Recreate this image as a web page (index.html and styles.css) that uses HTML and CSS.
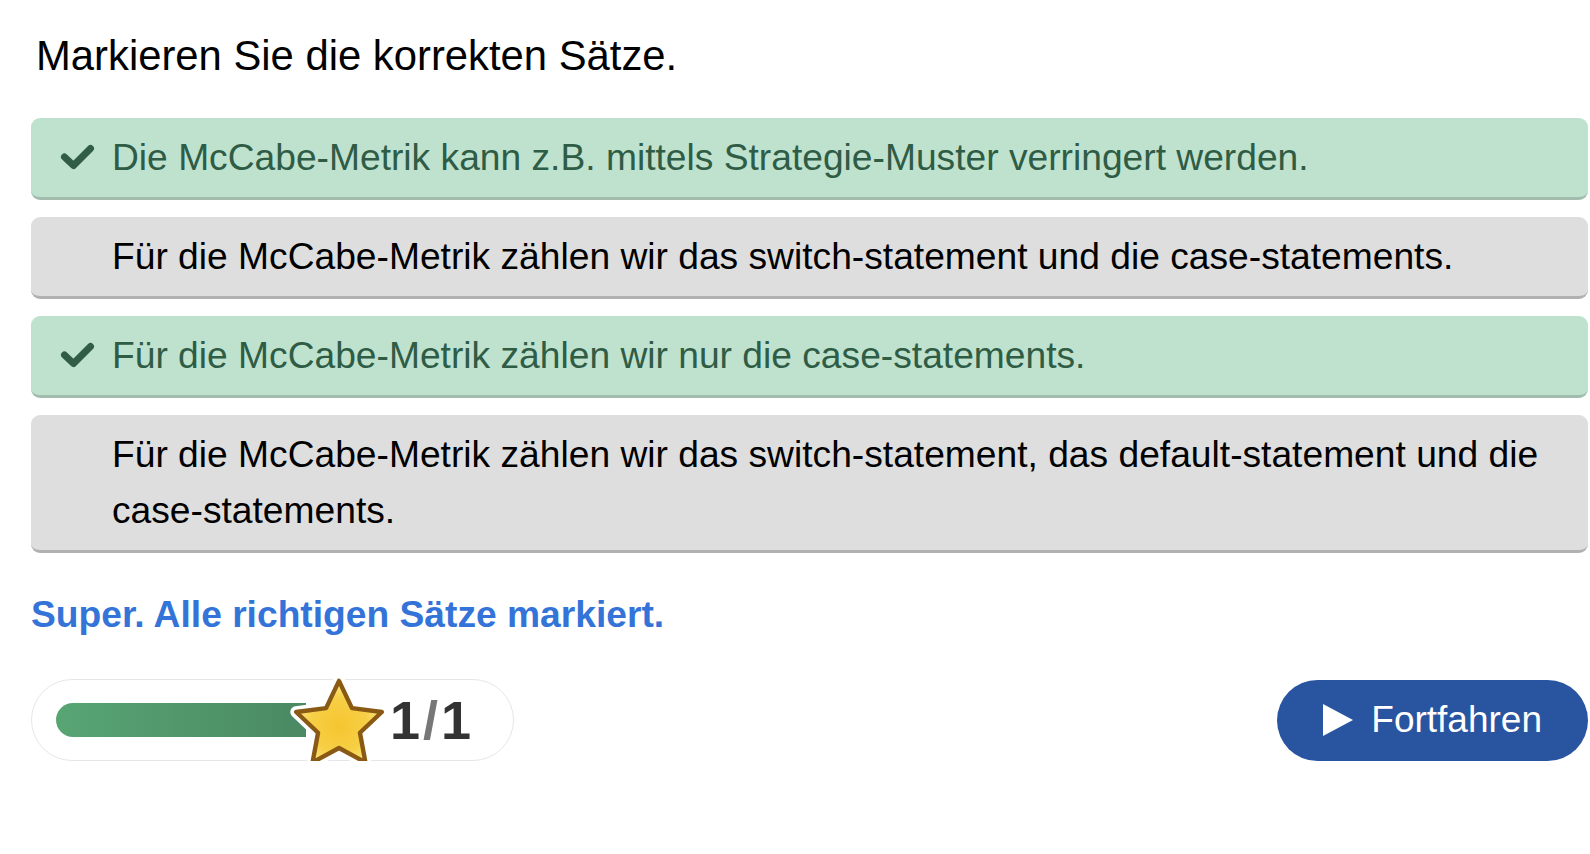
FILE: index.html
```html
<!DOCTYPE html>
<html lang="de">
<head>
<meta charset="utf-8">
<title>Markieren Sie die korrekten Sätze</title>
<link rel="stylesheet" href="styles.css">
</head>
<body>
<main class="task">
  <h1 class="task-title">Markieren Sie die korrekten Sätze.</h1>
  <ul class="choices">
    <li class="choice choice-correct">
      <svg class="check" viewBox="0 0 34 26" aria-hidden="true"><path d="M4 13 L13 21.5 L30 4.5" fill="none" stroke="currentColor" stroke-width="7" stroke-linecap="round" stroke-linejoin="round"/></svg>
      <span class="choice-text">Die McCabe-Metrik kann z.B. mittels Strategie-Muster verringert werden.</span>
    </li>
    <li class="choice">
      <span class="choice-text">Für die McCabe-Metrik zählen wir das switch-statement und die case-statements.</span>
    </li>
    <li class="choice choice-correct">
      <svg class="check" viewBox="0 0 34 26" aria-hidden="true"><path d="M4 13 L13 21.5 L30 4.5" fill="none" stroke="currentColor" stroke-width="7" stroke-linecap="round" stroke-linejoin="round"/></svg>
      <span class="choice-text">Für die McCabe-Metrik zählen wir nur die case-statements.</span>
    </li>
    <li class="choice">
      <span class="choice-text">Für die McCabe-Metrik zählen wir das switch-statement, das default-statement und die case-statements.</span>
    </li>
  </ul>
  <p class="feedback">Super. Alle richtigen Sätze markiert.</p>
  <div class="footer">
    <div class="score">
      <div class="score-bar"></div>
      <svg class="star" viewBox="0 0 100 96" aria-hidden="true">
        <defs>
          <radialGradient id="starFill" cx="50%" cy="55%" r="55%">
            <stop offset="0" stop-color="#f5c530"/>
            <stop offset="0.6" stop-color="#f7cf45"/>
            <stop offset="1" stop-color="#fde98a"/>
          </radialGradient>
        </defs>
        <path d="M50 6 L63.2 33.8 L93.75 37.8 L71.4 59 L77 89.2 L50 74.5 L23 89.2 L28.6 59 L6.25 37.8 L36.8 33.8 Z" fill="#fff" stroke="#fff" stroke-width="12" stroke-linejoin="round"/>
        <path d="M50 6 L63.2 33.8 L93.75 37.8 L71.4 59 L77 89.2 L50 74.5 L23 89.2 L28.6 59 L6.25 37.8 L36.8 33.8 Z" fill="url(#starFill)" stroke="#8a5a15" stroke-width="4.5" stroke-linejoin="round"/>
      </svg>
      <span class="score-text">1<span class="score-slash">/</span>1</span>
    </div>
    <button class="continue" type="button">
      <svg class="play" viewBox="0 0 30 32" aria-hidden="true"><path d="M0 0 L30 16 L0 32 Z" fill="#fff"/></svg>
      <span>Fortfahren</span>
    </button>
  </div>
</main>
</body>
</html>
```

FILE: styles.css
```css
html, body {
  margin: 0;
  padding: 0;
  background: #ffffff;
}

body {
  font-family: "Liberation Sans", Arial, sans-serif;
  color: #000;
}

.task {
  padding: 32px 2px 0 31px;
}

.task-title {
  margin: 0 0 39px 5px;
  font-size: 41.8px;
  font-weight: normal;
  line-height: 47px;
  color: #000;
}

.choices {
  list-style: none;
  margin: 0;
  padding: 0;
  display: flex;
  flex-direction: column;
  gap: 17px;
}

.choice {
  position: relative;
  display: flex;
  align-items: flex-start;
  padding: 11px 20px 12px 81px;
  background: #dedede;
  border-bottom: 3px solid #b1b1b1;
  border-radius: 9px;
  font-size: 37.2px;
  line-height: 56px;
  color: #000;
}

.choice-correct {
  background: #bfe2cf;
  border-bottom-color: #a2bdad;
  color: #2f5c45;
}

.check {
  position: absolute;
  left: 29px;
  top: 26px;
  width: 35px;
  height: 26px;
  color: #315d47;
}

.feedback {
  margin: 40px 0 0 0;
  font-size: 37.2px;
  font-weight: bold;
  line-height: 42px;
  color: #3474d8;
}

.footer {
  margin-top: 44px;
  display: flex;
  align-items: center;
  justify-content: space-between;
}

.score {
  display: flex;
  align-items: center;
  width: 483px;
  height: 82px;
  box-sizing: border-box;
  padding-left: 24px;
  border: 1px solid #e6e6e6;
  border-radius: 41px;
}

.score-bar {
  width: 250px;
  height: 34px;
  border-radius: 17px 0 0 17px;
  background: linear-gradient(to right, #58a574, #4a8962);
}

.star {
  width: 98px;
  height: 94px;
  margin-left: -16px;
  margin-top: 4px;
  flex: none;
}

.score-text {
  margin-left: 2px;
  font-size: 54px;
  font-weight: bold;
  color: #333;
  line-height: 1;
}

.score-slash {
  color: #777;
  padding: 0 3px;
}

.continue {
  display: flex;
  align-items: center;
  gap: 18px;
  height: 81px;
  padding: 0 46px;
  border: none;
  border-radius: 41px;
  background: #2955a0;
  color: #fff;
  font-family: "Liberation Sans", Arial, sans-serif;
  font-size: 37px;
  cursor: pointer;
}

.play {
  width: 30px;
  height: 32px;
}
```
